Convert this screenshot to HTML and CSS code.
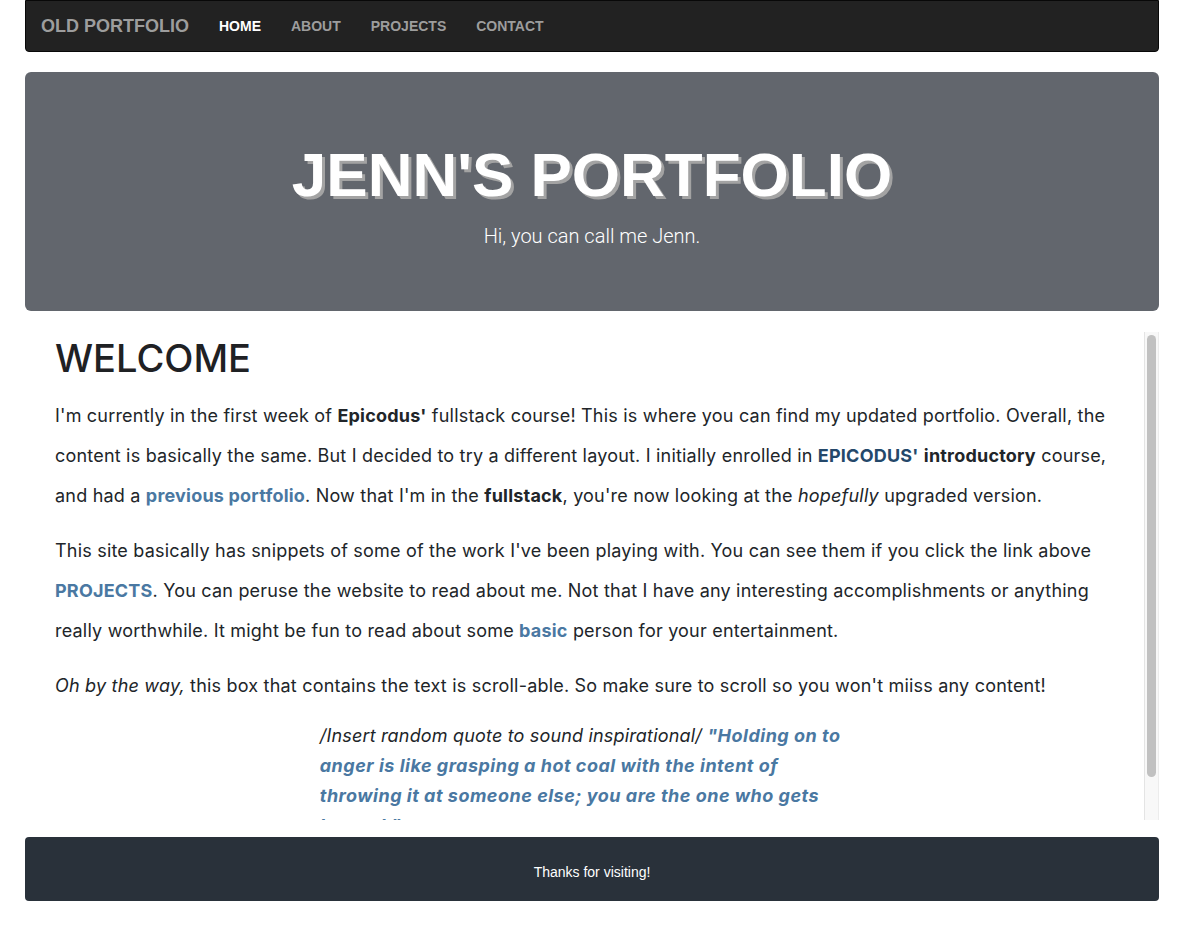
FILE: index.html
```html
<!DOCTYPE html>
<html lang="en">
<head>
<meta charset="utf-8">
<title>Jenn's Portfolio</title>
<link rel="stylesheet" href="styles.css">
</head>
<body>
<div class="page">
  <nav class="navbar">
    <a class="brand" href="#">OLD PORTFOLIO</a>
    <ul class="nav">
      <li><a class="active" href="#">HOME</a></li>
      <li><a href="#">ABOUT</a></li>
      <li><a href="#">PROJECTS</a></li>
      <li><a href="#">CONTACT</a></li>
    </ul>
  </nav>

  <header class="jumbotron">
    <h1 class="title">JENN'S PORTFOLIO</h1>
    <p class="subtitle">Hi, you can call me Jenn.</p>
  </header>

  <section class="content-box">
    <main class="content">
      <h2 class="welcome">WELCOME</h2>
      <p>I'm currently in the first week of <strong>Epicodus'</strong> fullstack course! This is where you can find my updated portfolio. Overall, the content is basically the same. But I decided to try a different layout. I initially enrolled in <a class="dark" href="#">EPICODUS'</a> <strong>introductory</strong> course, and had a <a href="#">previous portfolio</a>. Now that I'm in the <strong>fullstack</strong>, you're now looking at the <em>hopefully</em> upgraded version.</p>
      <p>This site basically has snippets of some of the work I've been playing with. You can see them if you click the link above <a href="#">PROJECTS</a>. You can peruse the website to read about me. Not that I have any interesting accomplishments or anything really worthwhile. It might be fun to read about some <a href="#">basic</a> person for your entertainment.</p>
      <p><em>Oh by the way,</em> this box that contains the text is scroll-able. So make sure to scroll so you won't miiss any content!</p>
      <blockquote class="quote">/Insert random quote to sound inspirational/ <a href="#">"Holding on to anger is like grasping a hot coal with the intent of throwing it at someone else; you are the one who gets burned."</a></blockquote>
    </main>
    <div class="scrollbar" aria-hidden="true"><div class="thumb"></div></div>
  </section>

  <footer class="footer">Thanks for visiting!</footer>
</div>
</body>
</html>
```

FILE: styles.css
```css
html, body {
  margin: 0;
  padding: 0;
  background: #ffffff;
}

.page {
  width: 1134px;
  margin: 0 29px 0 25px;
  display: flex;
  flex-direction: column;
}

/* Navbar */
.navbar {
  display: flex;
  align-items: center;
  height: 50px;
  background: #222222;
  border: 1px solid #080808;
  border-radius: 0 0 4px 4px;
  font-family: "Liberation Sans", Arial, sans-serif;
}

.brand {
  padding: 0 15px;
  font-size: 18px;
  font-weight: bold;
  color: #9d9d9d;
  text-decoration: none;
  line-height: 50px;
}

.nav {
  display: flex;
  list-style: none;
  margin: 0;
  padding: 0;
}

.nav a {
  display: block;
  padding: 0 15px;
  line-height: 50px;
  font-size: 14px;
  font-weight: bold;
  color: #9d9d9d;
  text-decoration: none;
}

.nav a.active {
  color: #ffffff;
}

/* Jumbotron */
.jumbotron {
  margin-top: 20px;
  height: 239px;
  background: #62666d;
  border-radius: 6px;
  display: flex;
  flex-direction: column;
  align-items: center;
  color: #ffffff;
}

.title {
  margin: 68px 0 0 0;
  font-family: "Liberation Sans", Arial, sans-serif;
  font-weight: bold;
  font-size: 62px;
  line-height: 70px;
  text-shadow: 3px 3px 0 #a3a3a3;
}

.subtitle {
  margin: 14px 0 0 0;
  font-family: Roboto, "Liberation Sans", sans-serif;
  font-weight: 300;
  font-size: 20px;
  line-height: 24px;
}

/* Content */
.content-box {
  margin-top: 21px;
  height: 488px;
  display: flex;
}

.content {
  flex: 1;
  overflow-y: auto;
  scrollbar-width: none;
  padding: 1px 30px 20px 30px;
  box-sizing: border-box;
  font-family: Inter, "Noto Sans", sans-serif;
  color: #212529;
}

.content::-webkit-scrollbar {
  display: none;
}

.scrollbar {
  width: 15px;
  box-sizing: border-box;
  background: #f8f8f8;
  border-left: 1px solid #e4e4e4;
  border-right: 1px solid #ececec;
  padding: 3px 2px 0 2px;
}

.thumb {
  height: 442px;
  background: #c1c1c1;
  border-radius: 5px;
}

.welcome {
  margin: 0 0 13px 0;
  font-size: 38px;
  font-weight: 500;
  line-height: 50px;
  color: #1f2124;
}

.content p {
  margin: 0 0 15px 0;
  font-size: 18px;
  line-height: 40px;
  letter-spacing: 0.2px;
}

.content a {
  color: #4a78a2;
  font-weight: bold;
  text-decoration: none;
}

.content a.dark {
  color: #24486a;
}

.content strong {
  font-weight: bold;
}

.quote {
  width: 50%;
  margin: 0 auto;
  font-size: 18px;
  letter-spacing: 0.17px;
  line-height: 30px;
  font-style: italic;
}

.quote a {
  font-style: italic;
  letter-spacing: 0.5px;
}

/* Footer */
.footer {
  margin-top: 17px;
  height: 64px;
  box-sizing: border-box;
  padding-top: 5px;
  background: #29313a;
  border-radius: 4px;
  display: flex;
  align-items: center;
  justify-content: center;
  color: #ffffff;
  font-family: "Liberation Sans", Arial, sans-serif;
  font-size: 14px;
}
```
